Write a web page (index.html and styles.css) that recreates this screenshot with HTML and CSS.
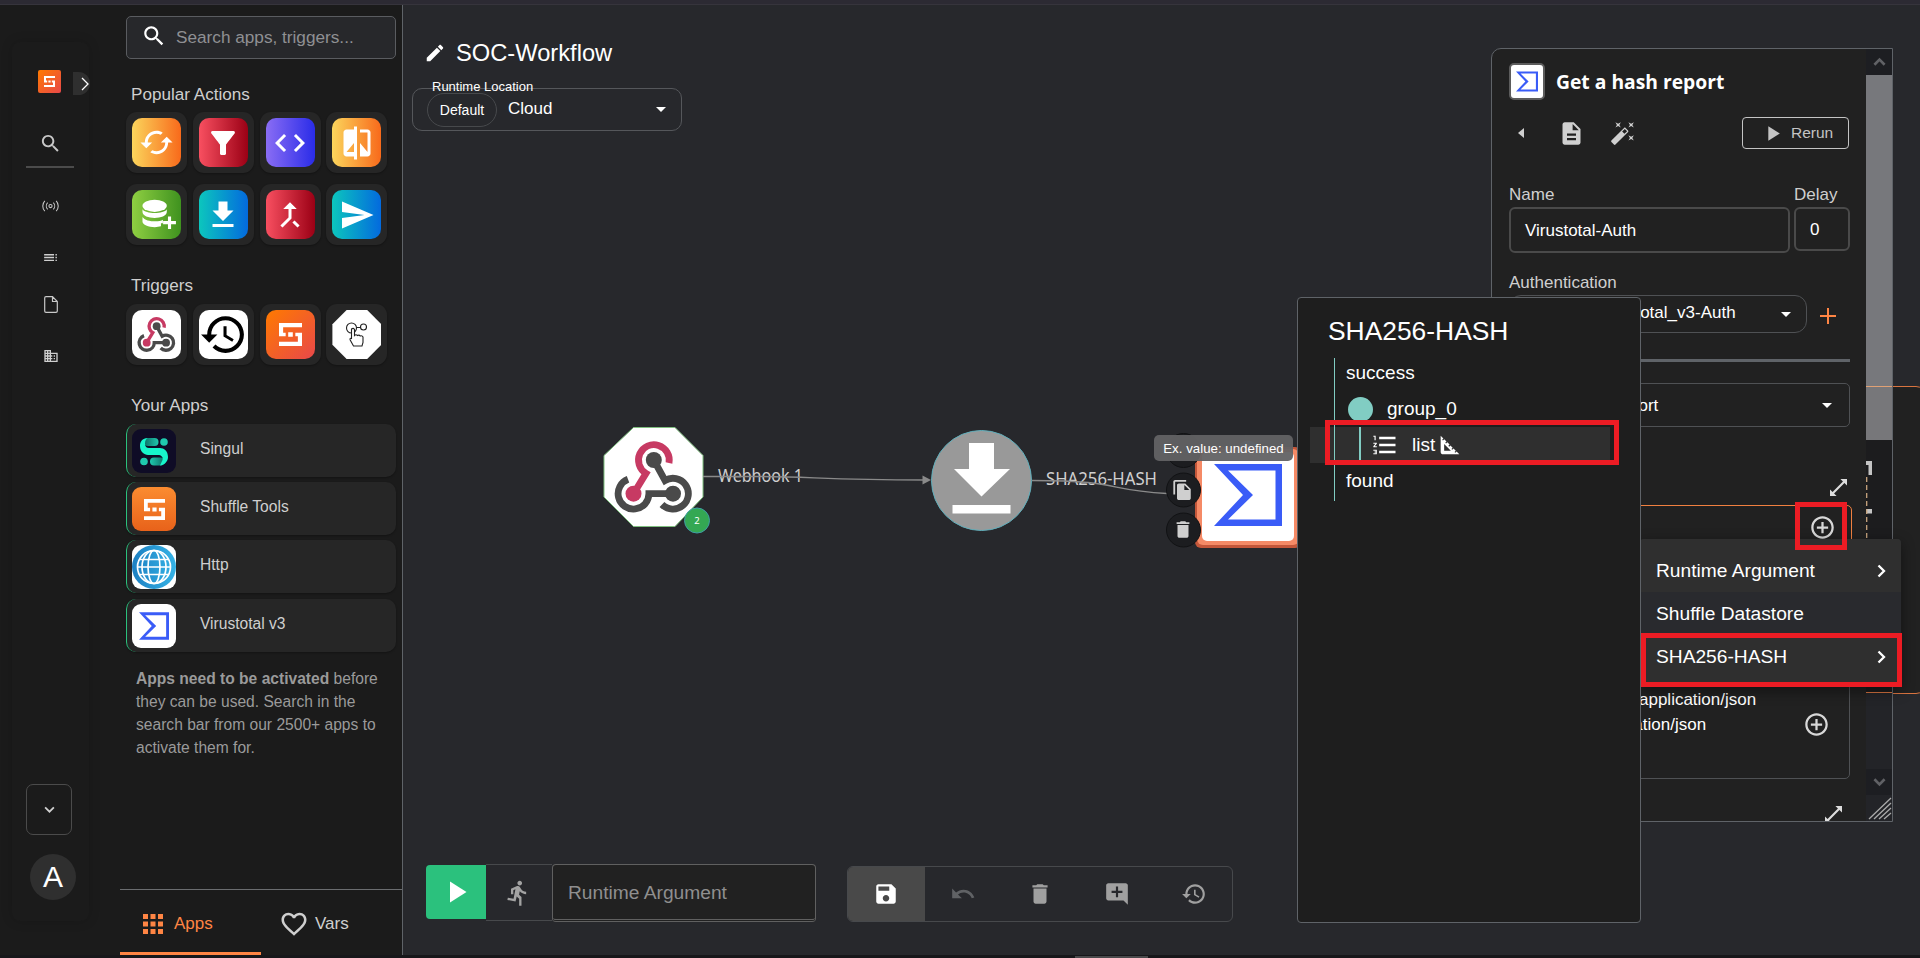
FILE: index.html
```html
<!DOCTYPE html>
<html lang="en">
<head>
<meta charset="utf-8">
<title>SOC-Workflow</title>
<link rel="stylesheet" href="styles.css">
</head>
<body>
<svg class="sprite" aria-hidden="true">
  <defs>
    <linearGradient id="teal" x1="0" x2="1"><stop offset="0" stop-color="#0d6e66"/><stop offset="1" stop-color="#1fc9ae"/></linearGradient>
    <linearGradient id="teal2" x1="0" x2="1"><stop offset="0" stop-color="#1fc9ae"/><stop offset="1" stop-color="#0d6e66"/></linearGradient>
    <linearGradient id="globe" x1="0" x2="1"><stop offset="0" stop-color="#1c7fc2"/><stop offset="1" stop-color="#35b3e6"/></linearGradient>
  </defs>
  <symbol id="search" viewBox="0 0 24 24"><path d="M15.5 14h-.79l-.28-.27C15.41 12.59 16 11.11 16 9.5 16 5.91 13.09 3 9.5 3S3 5.91 3 9.5 5.91 16 9.5 16c1.61 0 3.09-.59 4.23-1.57l.27.28v.79l5 4.99L20.49 19l-4.99-5zm-6 0C7.01 14 5 11.99 5 9.5S7.01 5 9.5 5 14 7.01 14 9.5 11.99 14 9.5 14z"/></symbol>
  <symbol id="cached" viewBox="0 0 24 24"><path d="M19 8l-4 4h3c0 3.31-2.69 6-6 6-1.01 0-1.97-.25-2.8-.7l-1.46 1.46C8.97 19.54 10.43 20 12 20c4.42 0 8-3.58 8-8h3l-4-4zM6 12c0-3.31 2.69-6 6-6 1.01 0 1.97.25 2.8.7l1.46-1.46C15.03 4.46 13.57 4 12 4c-4.42 0-8 3.58-8 8H1l4 4 4-4H6z"/></symbol>
  <symbol id="filter" viewBox="0 0 24 24"><path d="M4.25 5.61C6.27 8.2 10 13 10 13v6c0 .55.45 1 1 1h2c.55 0 1-.45 1-1v-6s3.72-4.8 5.74-7.39c.51-.66.04-1.61-.79-1.61H5.04c-.83 0-1.3.95-.79 1.61z"/></symbol>
  <symbol id="code" viewBox="0 0 24 24"><path d="M9.4 16.6 4.8 12l4.6-4.6L8 6l-6 6 6 6 1.4-1.4zm5.2 0 4.6-4.6-4.6-4.6L16 6l6 6-6 6-1.4-1.4z"/></symbol>
  <symbol id="compare" viewBox="0 0 24 24"><path d="M10 3H5c-1.1 0-2 .9-2 2v14c0 1.1.9 2 2 2h5v2h2V1h-2v2zm0 15H5l5-6v6zm9-15h-5v2h5v13l-5-6v9h5c1.1 0 2-.9 2-2V5c0-1.1-.9-2-2-2z"/></symbol>
  <symbol id="dbadd" viewBox="0 0 36 31"><ellipse cx="13" cy="6.5" rx="12.5" ry="6.3"/><path d="M.5 10c3 5.200 22 5.200 25 0v3c0 8-25 8-25 0zM.5 18c3 5.200 17 5.600 21 3v3.500h-2v3.200C11 30 .5 27 .5 23zM26.700 17.500h3.200v4.700h5v3.300h-5v4.800h-3.200v-4.800h-5v-3.300h5z"/></symbol>
  <symbol id="download" viewBox="0 0 24 24"><path d="M19 9h-4V3H9v6H5l7 7 7-7zM5 18v2h14v-2H5z"/></symbol>
  <symbol id="merge" viewBox="0 0 24 24"><path d="M17 20.41 18.41 19 15 15.59 13.59 17 17 20.41zM7.500 8H11v5.59L5.590 19 7 20.41l6-6V8h3.500L12 3.500 7.500 8z"/></symbol>
  <symbol id="send" viewBox="0 0 24 24"><path d="M2.010 21 23 12 2.010 3 2 10l15 2-15 2z"/></symbol>
  <symbol id="history" viewBox="0 0 24 24"><path d="M13 3c-4.970 0-9 4.030-9 9H1l3.890 3.890.07.14L9 12H6c0-3.870 3.130-7 7-7s7 3.130 7 7-3.130 7-7 7c-1.930 0-3.680-.79-4.940-2.060l-1.420 1.420C8.270 19.990 10.510 21 13 21c4.970 0 9-4.030 9-9s-4.030-9-9-9zm-1 5v5l4.280 2.540.72-1.210-3.500-2.080V8H12z"/></symbol>
  <symbol id="edit" viewBox="0 0 24 24"><path d="M3 17.250V21h3.750L17.810 9.940l-3.750-3.750L3 17.250zM20.710 7.040c.39-.39.39-1.020 0-1.410l-2.340-2.340c-.39-.39-1.020-.39-1.410 0l-1.830 1.830 3.750 3.750 1.830-1.830z"/></symbol>
  <symbol id="play" viewBox="0 0 24 24"><path d="M8 5v14l11-7z"/></symbol>
  <symbol id="run" viewBox="0 0 24 24"><path d="M13.490 5.480c1.100 0 2-.9 2-2s-.9-2-2-2-2 .9-2 2 .9 2 2 2zm-3.600 13.900 1-4.400 2.100 2v6h2v-7.500l-2.100-2 .6-3c1.300 1.500 3.300 2.500 5.500 2.500v-2c-1.900 0-3.500-1-4.300-2.400l-1-1.600c-.4-.6-1-1-1.700-1-.3 0-.5.1-.8.1l-5.200 2.200v4.700h2v-3.400l1.800-.7-1.600 8.100-4.900-1-.4 2 7 1.400z"/></symbol>
  <symbol id="save" viewBox="0 0 24 24"><path d="M17 3H5c-1.110 0-2 .9-2 2v14c0 1.100.89 2 2 2h14c1.100 0 2-.9 2-2V7l-4-4zm-5 16c-1.660 0-3-1.340-3-3s1.340-3 3-3 3 1.340 3 3-1.340 3-3 3zm3-10H5V5h10v4z"/></symbol>
  <symbol id="undo" viewBox="0 0 24 24"><path d="M12.500 8c-2.650 0-5.050.99-6.900 2.600L2 7v9h9l-3.620-3.620c1.390-1.160 3.160-1.880 5.120-1.880 3.540 0 6.550 2.310 7.600 5.500l2.370-.78C21.080 11.030 17.150 8 12.500 8z"/></symbol>
  <symbol id="trash" viewBox="0 0 24 24"><path d="M6 19c0 1.100.9 2 2 2h8c1.100 0 2-.9 2-2V7H6v12zM19 4h-3.500l-1-1h-5l-1 1H5v2h14V4z"/></symbol>
  <symbol id="comment" viewBox="0 0 24 24"><path d="M21.990 4c0-1.100-.89-2-1.990-2H4c-1.100 0-2 .9-2 2v12c0 1.100.9 2 2 2h14l4 4-.01-18zM17 11h-4v4h-2v-4H7V9h4V5h2v4h4v2z"/></symbol>
  <symbol id="doc" viewBox="0 0 24 24"><path d="M14 2H6c-1.100 0-1.990.9-1.990 2L4 20c0 1.100.89 2 1.990 2H18c1.100 0 2-.9 2-2V8l-6-6zm2 16H8v-2h8v2zm0-4H8v-2h8v2zm-3-5V3.500L18.500 9H13z"/></symbol>
  <symbol id="wand" viewBox="0 0 24 24"><path d="M7.500 5.600L10 7 8.600 4.500 10 2 7.500 3.400 5 2l1.400 2.500L5 7zm12 9.800L17 14l1.400 2.500L17 19l2.500-1.400L22 19l-1.400-2.500L22 14zM22 2l-2.500 1.400L17 2l1.400 2.500L17 7l2.500-1.400L22 7l-1.400-2.500zm-7.630 5.290c-.39-.39-1.020-.39-1.410 0L1.290 18.960c-.39.39-.39 1.020 0 1.410l2.340 2.340c.39.39 1.020.39 1.410 0L16.700 11.050c.39-.39.39-1.020 0-1.410l-2.330-2.350zm-1.030 5.490l-2.120-2.120 2.440-2.440 2.120 2.120-2.440 2.440z"/></symbol>
  <symbol id="copy" viewBox="0 0 24 24"><path d="M16 1H4c-1.100 0-2 .9-2 2v14h2V3h12V1zm-1 4l6 6v10c0 1.100-.9 2-2 2H7.990C6.890 23 6 22.100 6 21l.01-14c0-1.100.89-2 1.990-2h7zm-1 7h5.500L14 6.500V12z"/></symbol>
  <symbol id="heart" viewBox="0 0 24 24"><path d="M16.500 3c-1.740 0-3.410.81-4.500 2.090C10.910 3.810 9.240 3 7.500 3 4.420 3 2 5.420 2 8.500c0 3.780 3.400 6.860 8.550 11.540L12 21.350l1.450-1.320C18.600 15.360 22 12.280 22 8.500 22 5.420 19.580 3 16.500 3zm-4.400 15.550l-.1.100-.1-.1C7.140 14.240 4 11.390 4 8.500 4 6.500 5.500 5 7.500 5c1.540 0 3.040.99 3.570 2.360h1.870C13.460 5.990 14.960 5 16.500 5c2 0 3.500 1.500 3.500 3.500 0 2.890-3.140 5.740-7.900 10.050z"/></symbol>
  <symbol id="apps" viewBox="0 0 24 24"><path d="M4 8h4V4H4v4zm6 12h4v-4h-4v4zm-6 0h4v-4H4v4zm0-6h4v-4H4v4zm6 0h4v-4h-4v4zm6-10v4h4V4h-4zm-6 4h4V4h-4v4zm6 6h4v-4h-4v4zm0 6h4v-4h-4v4z"/></symbol>
  <symbol id="numlist" viewBox="0 0 24 24"><path d="M2 17h2v.5H3v1h1v.5H2v1h3v-4H2v1zm1-9h1V4H2v1h1v3zm-1 3h1.800L2 13.100v.9h3v-1H3.200L5 10.900V10H2v1zm5-6v2h14V5H7zm0 14h14v-2H7v2zm0-6h14v-2H7v2z"/></symbol>
  <symbol id="ruler" viewBox="0 0 24 24"><path d="M17.660 17.660l-1.060 1.060-.71-.71 1.060-1.060-1.940-1.940-1.060 1.060-.71-.71 1.060-1.060-1.940-1.940-1.060 1.060-.71-.71 1.060-1.060L9.700 9.700l-1.060 1.060-.71-.71 1.060-1.060-1.940-1.940-1.060 1.060-.71-.71 1.060-1.060L4 4v14c0 1.100.9 2 2 2h14l-2.340-2.340zM7 17v-5.760L12.760 17H7z"/></symbol>
  <symbol id="addcircle" viewBox="0 0 24 24"><path d="M13 7h-2v4H7v2h4v4h2v-4h4v-2h-4V7zm-1-5C6.480 2 2 6.480 2 12s4.480 10 10 10 10-4.480 10-10S17.520 2 12 2zm0 18c-4.410 0-8-3.590-8-8s3.590-8 8-8 8 3.590 8 8-3.590 8-8 8z"/></symbol>
  <symbol id="toc" viewBox="0 0 24 24"><path d="M3 9h14V7H3v2zm0 4h14v-2H3v2zm0 4h14v-2H3v2zm16 0h2v-2h-2v2zm0-10v2h2V7h-2zm0 6h2v-2h-2v2z"/></symbol>
  <symbol id="business" viewBox="0 0 24 24"><path d="M12 7V3H2v18h20V7H12zM6 19H4v-2h2v2zm0-4H4v-2h2v2zm0-4H4V9h2v2zm0-4H4V5h2v2zm4 12H8v-2h2v2zm0-4H8v-2h2v2zm0-4H8V9h2v2zm0-4H8V5h2v2zm10 12h-8v-2h2v-2h-2v-2h2v-2h-2V9h8v10zm-2-8h-2v2h2v-2zm0 4h-2v2h2v-2z"/></symbol>
  <symbol id="expand" viewBox="0 0 18 18"><path d="M18 7V0h-7l2.700 2.700L2.700 13.700 0 11v7h7l-2.700-2.700L15.300 4.300z"/></symbol>
  <symbol id="webhook" viewBox="0 0 100 100"><g fill="none" stroke-width="6.800"><path stroke="#4a4a4a" d="M24.500 52.300A15.400 15.400 0 1 0 45.400 66.700H69.500M50.300 33 61.500 53.500A15.400 15.400 0 1 1 58.500 77.500"/><path stroke="#c73a63" d="M65.500 36A15.400 15.400 0 1 0 42.500 46.300L30 66.700"/></g><circle cx="50.300" cy="33" r="8" fill="#4a4a4a"/><circle cx="69.500" cy="66.700" r="8" fill="#4a4a4a"/><circle cx="30" cy="66.700" r="8" fill="#c73a63"/></symbol>
  <symbol id="vt" viewBox="0 0 68 62"><path fill="#3a5cf7" fill-rule="evenodd" d="M0 0H68V62H0L29 31ZM14 6.500 39 31 14 55.500H61.500V6.500Z"/></symbol>
  <symbol id="shuffle" viewBox="0 0 100 100"><path d="M0 0H100V18H18V42H29V58H0ZM100 100H0V82H82V58H71V42H100ZM40 40H60V60H40Z"/></symbol>
</svg>

<div class="topstrip"></div>
<div class="app">
  <nav class="rail">
    <div class="rail-card">
      <div class="rail-head">
        <span class="brand"><svg><use href="#shuffle"/></svg></span>
        <span class="rail-toggle"><svg viewBox="0 0 8 14"><path d="M1 1 7 7 1 13"/></svg></span>
      </div>
      <svg class="r-search"><use href="#search"/></svg>
      <div class="r-line"></div>
      <svg class="r-cast" viewBox="0 0 18 14"><circle cx="9" cy="7" r="1.700"/><path d="M6 3.500a5 5 0 0 0 0 7M12 3.500a5 5 0 0 1 0 7M3 1.500a8 8 0 0 0 0 11M15 1.500a8 8 0 0 1 0 11"/></svg>
      <svg class="r-toc"><use href="#toc"/></svg>
      <svg class="r-file" viewBox="0 0 14 17"><path d="M.7 2Q.7.700 2 .700H8.500L13.300 5.500V15Q13.300 16.300 12 16.300H2Q.7 16.300.7 15ZM8.500.7V5.500H13.300"/></svg>
      <svg class="r-biz"><use href="#business"/></svg>
      <div class="r-drop"><svg viewBox="0 0 12 8"><path d="M1 1.500 6 6.500 11 1.500"/></svg></div>
      <div class="avatar">A</div>
    </div>
  </nav>

  <aside class="side">
    <div class="side-body">
      <div class="searchbox"><svg><use href="#search"/></svg><span>Search apps, triggers...</span></div>
      <h4 class="t1">Popular Actions</h4>
      <div class="tiles">
        <div class="tile"><i class="orange"><svg class="s35"><use href="#cached"/></svg></i></div>
        <div class="tile"><i class="red"><svg class="s36"><use href="#filter"/></svg></i></div>
        <div class="tile"><i class="violet"><svg class="s36"><use href="#code"/></svg></i></div>
        <div class="tile"><i class="orange"><svg class="s36"><use href="#compare"/></svg></i></div>
        <div class="tile"><i class="green"><svg class="s-db"><use href="#dbadd"/></svg></i></div>
        <div class="tile"><i class="cyan"><svg class="s36"><use href="#download"/></svg></i></div>
        <div class="tile"><i class="red"><svg class="s36"><use href="#merge"/></svg></i></div>
        <div class="tile"><i class="cyan"><svg class="s36"><use href="#send"/></svg></i></div>
      </div>
      <h4 class="t2">Triggers</h4>
      <div class="tiles">
        <div class="tile"><i class="white"><svg class="s49"><use href="#webhook"/></svg></i></div>
        <div class="tile"><i class="white dark"><svg class="s49"><use href="#history"/></svg></i></div>
        <div class="tile"><i class="brandbg"><svg class="s23"><use href="#shuffle"/></svg></i></div>
        <div class="tile"><i class="octo"><svg class="s49" viewBox="0 0 49 49" fill="none" stroke="#222" stroke-width="1.100"><g fill="none"><circle cx="19.500" cy="18" r="5"/><circle cx="31.500" cy="17" r="3"/><path d="M24.500 17.500h4"/></g><path fill="#fff" d="M19.500 19q2-1.500 3 .5v6q1.500-1.500 3 0 1.700-1 2.700.5 2-.7 2.800 1v5.500L30 36H21.500l-3.300-6q-.8-2.200 1.300-1.500z"/></svg></i></div>
      </div>
      <h4 class="t3">Your Apps</h4>
      <div class="applist">
        <div class="approw"><i class="singul"><svg viewBox="0 0 44 44"><rect x="12" y="9" width="14.500" height="8" rx="4" fill="url(#teal)"/><rect x="18" y="28.500" width="14.500" height="8" rx="4" fill="url(#teal2)"/><circle cx="32" cy="13" r="3.800" fill="#1fc9ae"/><circle cx="12" cy="32.500" r="3.800" fill="#1fc9ae"/><path fill="#17f5cb" d="M16 9C10 9 8 13 8 17 8 22.500 12 26 16 26H26C29 26 31.500 28 30.500 31L28 36.500C33 36 36 32 36 28 36 22 32 19 28 19H17C14.500 19 13 17.500 13 14.500 13 11.500 14 10 16 9Z"/></svg></i><span>Singul</span></div>
        <div class="approw"><i class="shuf"><svg class="s21"><use href="#shuffle"/></svg></i><span>Shuffle Tools</span></div>
        <div class="approw"><i class="white"><svg viewBox="0 0 44 44"><circle cx="22" cy="22" r="22" fill="url(#globe)"/><g fill="none" stroke="#fff" stroke-width="1.700"><circle cx="22" cy="22" r="16.500"/><ellipse cx="22" cy="22" rx="6" ry="16.500"/><ellipse cx="22" cy="22" rx="12" ry="16.500"/><path d="M5.500 22H38.500M8 14.500H36M8 29.500H36"/></g></svg></i><span>Http</span></div>
        <div class="approw"><i class="white"><svg class="vt30"><use href="#vt"/></svg></i><span>Virustotal v3</span></div>
      </div>
      <p class="hint"><b>Apps need to be activated</b> before<br>they can be used. Search in the<br>search bar from our 2500+ apps to<br>activate them for.</p>
    </div>
    <div class="tabs">
      <div class="tab on"><svg><use href="#apps"/></svg>Apps</div>
      <div class="tab"><svg class="h"><use href="#heart"/></svg>Vars</div>
    </div>
  </aside>

  <main class="canvas">
    <header class="wf-head">
      <div class="wf-title"><svg><use href="#edit"/></svg><h1>SOC-Workflow</h1></div>
      <div class="loc"><span class="loc-label">Runtime Location</span><span class="chip">Default</span><span class="loc-val">Cloud</span><i class="caret"></i></div>
    </header>

    <svg class="graph" viewBox="0 0 895 140">
      <path d="M230.500 18.500H272L300 46.500V88L272 117.500H230.500L201 88V46.500z" fill="#fff" stroke="#7fbf7f"/>
      <svg x="200.500" y="18" width="100" height="100"><use href="#webhook"/></svg>
      <circle cx="294" cy="111.500" r="12.500" fill="#34a853" stroke="#3f9fa5"/>
      <text x="294" y="115" class="g-num" text-anchor="middle">2</text>
      <text x="315" y="73" class="g-label" textLength="85" lengthAdjust="spacingAndGlyphs">Webhook 1</text>
      <circle cx="578.500" cy="71.500" r="50" fill="#999" stroke="#5fb0bd"/>
      <path fill="#fff" d="M566 34h25v26h16L578.500 87.500 551 60h15zM549.500 96h58v8.500h-58z"/>
      <text x="643" y="76" class="g-label" textLength="111" lengthAdjust="spacingAndGlyphs">SHA256-HASH</text>
      <g fill="none" stroke="#8a8a8a" stroke-width="1.400"><path d="M300 67.500H350C410 67.500 420 71 522 71M629 71.500C720 71.500 700 81 764 84.500"/></g>
      <path fill="#8a8a8a" d="M519.500 66.500 528 71 519.500 75.500z"/>
      <circle cx="845" cy="41" r="9.500" fill="#2f7fc9"/>
      <rect x="792" y="38" width="106" height="101" rx="6" fill="#c4573a"/>
      <rect x="794" y="40" width="102" height="96" rx="6" fill="#f58a66"/>
      <rect x="799" y="43" width="92" height="89" rx="5" fill="#fff"/>
      <svg x="811" y="55" width="68" height="62"><use href="#vt"/></svg>
      <g fill="#1c1d20" stroke="#111214"><circle cx="780.500" cy="41.500" r="17"/><circle cx="780.500" cy="81" r="17"/><circle cx="780.500" cy="121" r="17"/></g>
      <g fill="#e8e8e8"><svg x="768.500" y="70" width="22" height="22"><use href="#copy"/></svg><svg x="769" y="109.500" width="22" height="22"><use href="#trash"/></svg></g>
    </svg>
    <div class="tooltip">Ex. value: undefined</div>

    <footer class="bars">
      <div class="runbar">
        <div class="playbtn"><svg><use href="#play"/></svg></div>
        <div class="runbtn"><svg><use href="#run"/></svg></div>
        <div class="argbox">Runtime Argument</div>
      </div>
      <div class="tools">
        <div class="on"><svg><use href="#save"/></svg></div>
        <div class="dim"><svg><use href="#undo"/></svg></div>
        <div><svg><use href="#trash"/></svg></div>
        <div><svg><use href="#comment"/></svg></div>
        <div><svg><use href="#history"/></svg></div>
      </div>
    </footer>
  </main>
</div>
<div class="botstrip"><i></i></div>

<div class="backbox"></div>
<section class="panel">
  <div class="p-main">
    <div class="p-head"><span class="p-logo"><svg><use href="#vt"/></svg></span><h2>Get a hash report</h2></div>
    <div class="p-tools"><i class="left"></i><svg class="d"><use href="#doc"/></svg><svg class="w"><use href="#wand"/></svg><span class="rerun"><svg><use href="#play"/></svg>Rerun</span></div>
    <div class="p-row"><div class="f-name"><label>Name</label><div class="inp">Virustotal-Auth</div></div><div class="f-delay"><label>Delay</label><div class="inp">0</div></div></div>
    <label class="l-auth">Authentication</label>
    <div class="p-auth"><div class="sel"><span>Virustotal_v3-Auth</span><i class="caret"></i></div><svg viewBox="0 0 16 16"><path d="M8 0V16M0 8H16"/></svg></div>
    <div class="p-div"></div>
    <div class="sel2"><span>Get a hash report</span><i class="caret"></i></div>
    <svg class="exp"><use href="#expand"/></svg>
    <div class="idbox"><svg><use href="#addcircle"/></svg></div>
    <div class="hdrbox"><div>Content-Type=application/json<br>Accept=application/json</div><svg><use href="#addcircle"/></svg></div>
    <svg class="exp e2"><use href="#expand"/></svg>
  </div>
  <div class="scroll">
    <div class="sb"><svg viewBox="0 0 14 10"><path d="M1.500 8 7 2.500 12.500 8"/></svg></div>
    <div class="thumb"></div>
    <div class="track"><svg viewBox="0 0 8 82"><path fill="#c4c4c4" d="M0 2h6v14H2.500V6H0zM0 50h6v4.500H0z"/><path d="M.7 18V82" stroke="#c9a57f" stroke-width="1.300" stroke-dasharray="5 3"/></svg></div>
    <div class="sb"><svg viewBox="0 0 14 10"><path d="M1.500 2 7 7.500 12.500 2"/></svg></div>
    <div class="grip"><svg viewBox="0 0 26 25"><path d="M3 24 25 3M8 24 25 8M13 24 25 13M18 24 25 18" stroke="#aaa" stroke-width="1.300"/></svg></div>
  </div>
</section>

<div class="menu">
  <div class="mi a">Runtime Argument<svg viewBox="0 0 9 14"><path d="M1.500 1.500 7 7 1.500 12.500"/></svg></div>
  <div class="mi b">Shuffle Datastore</div>
  <div class="mi c">SHA256-HASH<svg viewBox="0 0 9 14"><path d="M1.500 1.500 7 7 1.500 12.500"/></svg></div>
</div>

<div class="pop">
  <h3>SHA256-HASH</h3>
  <div class="tree">
    <div class="tr">success</div>
    <div class="tr"><i class="dot"></i>group_0</div>
    <div class="tr hl"><svg class="n"><use href="#numlist"/></svg>list<svg class="r"><use href="#ruler"/></svg></div>
    <div class="tr">found</div>
  </div>
</div>
<div class="mark m1"></div>
<div class="mark m2"></div>
<div class="mark m3"></div>
</body>
</html>
```
FILE: styles.css
```css
* { box-sizing: border-box; }
body { margin: 0; width: 1920px; height: 958px; overflow: hidden; background: #1b1b1b; color: #cfcfcf; font-family: "Liberation Sans", Arial, sans-serif; font-size: 17px; display: flex; flex-direction: column; }
svg { display: block; fill: currentColor; flex: none; }
h1, h2, h3, h4, p { margin: 0; font-weight: 400; }
i { font-style: normal; display: block; flex: none; }
.sprite { position: absolute; width: 0; height: 0; }
.topstrip { height: 5px; background: #2c2a33; border-bottom: 1px solid #36343c; flex: none; }
.app { flex: 1; display: flex; min-height: 0; }
.botstrip { height: 3px; background: #17171a; flex: none; padding-left: 1075px; }
.botstrip i { width: 73px; height: 2px; margin-top: 1px; background: #4a4a4c; }

.rail { width: 120px; padding: 37px 0 0 12px; }
.rail-card { width: 77px; height: 879px; border-radius: 8px; background: #1b1b1b; box-shadow: 0 0 12px rgba(0,0,0,.16); display: flex; flex-direction: column; align-items: flex-start; padding-top: 28px; }
.rail-head { display: flex; padding-left: 26px; }
.brand { width: 23px; height: 23px; border-radius: 2px; background: linear-gradient(135deg, #ff7a00, #e8484a); display: grid; place-items: center; color: #fff; }
.brand svg { width: 11px; height: 11px; }
.rail-toggle { margin: 2px 0 0 12px; width: 17px; height: 23px; background: #2f2f2f; border-radius: 0 12px 12px 0; display: flex; align-items: center; justify-content: flex-end; padding-right: 1px; }
.rail-toggle svg { width: 8px; height: 14px; fill: none; stroke: #fff; stroke-width: 1.3; }
.r-search { width: 23px; height: 23px; margin: 37px 0 0 27px; color: #c8c8c8; }
.r-line { width: 48px; height: 2px; background: #4b4b4b; margin: 11px 0 0 14px; }
.r-cast { width: 17px; height: 14px; margin: 31px 0 0 30px; fill: none; stroke: #c8c8c8; stroke-width: 1.1; }
.r-toc { width: 17px; height: 17px; margin: 36px 0 0 30px; }
.r-file { width: 14px; height: 17px; margin: 30px 0 0 32px; fill: none; stroke: #c8c8c8; stroke-width: 1.2; }
.r-biz { width: 16px; height: 16px; margin: 35px 0 0 31px; }
.r-drop { width: 46px; height: 51px; border: 1px solid #4b4b4b; border-radius: 7px; margin: 420px 0 0 14px; display: grid; place-items: center; }
.r-drop svg { width: 11px; height: 7px; fill: none; stroke: #d0d0d0; stroke-width: 2; }
.avatar { width: 46px; height: 46px; border-radius: 50%; background: #2f2f2f; color: #fff; font-size: 30px; display: grid; place-items: center; margin: 19px 0 0 18px; }

.side { width: 283px; border-right: 1px solid #5f6368; display: flex; flex-direction: column; }
.side-body { flex: 1; padding: 11px 0 0 6px; }
.searchbox { width: 270px; height: 43px; border: 1px solid #5a5c60; border-radius: 5px; background: #27282b; display: flex; align-items: center; color: #8f9093; }
.searchbox svg { width: 26px; height: 26px; color: #fff; margin: -3px 8px 0 14px; }
.searchbox span { margin-left: 1px; font-size: 17.2px; }
h4 { font-size: 17.1px; line-height: 20px; padding-left: 5px; }
.t1 { margin-top: 26px; }
.t2 { margin-top: 31px; }
.t3 { margin-top: 31px; }
.tiles { display: grid; grid-template-columns: repeat(4, 61px); column-gap: 5.8px; row-gap: 11px; margin-top: 7px; }
.t2 + .tiles { margin-top: 8px; }
.tile { height: 61px; border-radius: 11px; background: #262626; padding: 6px; box-shadow: 0 1px 2px rgba(0,0,0,.3); }
.tile i { width: 49px; height: 49px; border-radius: 10px; display: grid; place-items: center; color: #fff; overflow: hidden; }
.orange { background: linear-gradient(90deg, #fbd55c, #f86a1b); }
.red { background: linear-gradient(90deg, #f84f60, #9b0015); }
.violet { background: linear-gradient(90deg, #8a6df4, #2a2ce8); }
.green { background: linear-gradient(90deg, #8fcf42, #3f921f); }
.cyan { background: linear-gradient(90deg, #0cc6bd, #036ade); }
.white { background: #fff; }
.tile i.dark { color: #000; }
.brandbg { background: linear-gradient(135deg, #ff7a00, #e8484a); }
.octo { background: #fff; clip-path: polygon(29% 0, 71% 0, 100% 29%, 100% 71%, 71% 100%, 29% 100%, 0 71%, 0 29%); }
.s35 { width: 35px; height: 35px; }
.s36 { width: 36px; height: 36px; }
.s49 { width: 49px; height: 49px; }
.s23 { width: 23px; height: 23px; }
.s21 { width: 21px; height: 21px; }
.s-db { width: 35px; height: 31px; margin-left: 5px; }
.applist { display: flex; flex-direction: column; gap: 5.2px; margin-top: 8px; }
.approw { width: 270px; height: 53px; background: #262626; border-radius: 10px; border-left: 1px solid #2bc17d; display: flex; padding: 5px; box-shadow: 0 1px 2px rgba(0,0,0,.3); }
.approw i { width: 44px; height: 44px; border-radius: 9px; overflow: hidden; display: grid; place-items: center; color: #fff; }
.approw span { margin: 11px 0 0 24px; font-size: 15.6px; line-height: 18px; }
.singul { background: #0f0c26; }
.shuf { background: linear-gradient(#fb8c30, #e8621a); }
.vt30 { width: 30px; height: 28px; }
.hint { font-size: 15.6px; line-height: 23.3px; color: #9a9a9a; margin: 15px 0 0 10px; white-space: nowrap; }
.tabs { height: 66px; border-top: 1px solid #6b6d70; display: flex; }
.tab { width: 141px; display: flex; align-items: center; padding: 3px 0 0 18px; }
.tab svg { width: 30px; height: 30px; margin-right: 6px; }
.tab.on { color: #ff8544; border-bottom: 3px solid #ff8544; padding-top: 6px; }
.tab .h { margin-right: 6px; }

.canvas { flex: 1; background: #27282c; position: relative; }
.wf-head { padding: 33px 0 0 9px; }
.wf-title { display: flex; align-items: center; color: #fff; height: 30px; }
.wf-title svg { width: 22px; height: 22px; margin: -1px 10px 0 12px; }
.wf-title h1 { font-size: 23.7px; }
.loc { position: relative; width: 270px; height: 43px; margin-top: 20px; border: 1px solid #55575b; border-radius: 10px; display: flex; align-items: center; color: #fff; padding-left: 14px; }
.loc-label { position: absolute; left: 19px; top: -10px; font-size: 13px; line-height: 15px; }
.chip { height: 34px; width: 70px; border: 1px solid #47494c; border-radius: 17px; display: grid; place-items: center; font-size: 14px; }
.loc-val { margin: -1px 0 0 11px; flex: 1; }
.caret { width: 10px; border: 5px solid transparent; border-top-color: #fff; border-bottom: 0; }
.loc .caret { margin-right: 15px; }
.graph { position: absolute; left: 0; top: 404px; width: 895px; height: 140px; }
.g-label { font-family: "Noto Sans", sans-serif; font-size: 17.5px; fill: #cfcfcf; }
.g-num { font-family: "Noto Sans", sans-serif; font-size: 9.5px; fill: #fff; }
.tooltip { position: absolute; left: 751px; top: 430px; width: 139px; height: 26px; border-radius: 5px; background: #626264f2; color: #fff; font-size: 13.3px; display: grid; place-items: center; white-space: nowrap; }
.bars { position: absolute; left: 23px; top: 859px; display: flex; gap: 31px; }
.runbar { display: flex; width: 390px; height: 58px; }
.playbtn { width: 60px; height: 54px; margin-top: 1px; background: #2bc17d; border-radius: 4px 0 0 4px; display: grid; place-items: center; color: #fff; }
.playbtn svg { width: 36px; height: 36px; }
.runbtn { width: 66px; border: solid #47494c; border-width: 1px 0; height: 57px; display: grid; place-items: center; color: #a3a3a3; padding-right: 3px; }
.runbtn svg { width: 28px; height: 28px; }
.argbox { flex: 1; border: 1px solid #606060; border-bottom: 3px double #606060; border-radius: 4px; background: #212121; color: #8f8f8f; font-size: 19.2px; display: flex; align-items: center; padding: 2px 0 0 15px; }
.tools { margin-top: 2px; width: 386px; height: 56px; border: 1px solid #47494c; border-radius: 6px; display: flex; overflow: hidden; color: #a0a0a0; }
.tools div { width: 77px; display: grid; place-items: center; }
.tools svg { width: 26px; height: 26px; }
.tools .on { background: #494949; color: #fff; }
.tools .dim { color: #606265; }

.backbox { position: absolute; left: 1860px; top: 386px; width: 66px; height: 308px; background: #212121; border: 1px solid #d97440; border-radius: 10px; }
.panel { position: absolute; left: 1491px; top: 48px; width: 402px; height: 774px; background: #212121; border: 1px solid #5f6368; border-radius: 10px 0 0 0; display: flex; overflow: hidden; }
.p-main { width: 374px; padding: 14px 0 0 17px; }
.p-head { display: flex; align-items: center; height: 37px; color: #fff; }
.p-logo { width: 36px; height: 37px; border: 2px solid #5c5c5c; border-radius: 5px; background: #fff; display: grid; place-items: center; }
.p-logo svg { width: 22px; height: 21px; }
.p-head h2 { font: 700 19.3px "Open Sans", sans-serif; margin-left: 11px; }
.p-tools { display: flex; align-items: center; margin-top: 17px; height: 32px; color: #d0d0d0; }
.left { width: 6px; border: 5px solid transparent; border-right: 6px solid #d0d0d0; border-left: 0; margin-left: 9px; }
.p-tools .d { width: 27px; height: 27px; margin-left: 34px; }
.p-tools .w { width: 26px; height: 26px; margin-left: 25px; }
.rerun { margin-left: 106px; width: 107px; height: 32px; border: 1px solid #c4c4c4; border-radius: 4px; display: flex; align-items: center; font-size: 15.5px; color: #c4c4c4; padding-left: 17px; }
.rerun svg { width: 25px; height: 25px; margin-right: 6px; }
.p-row { display: flex; gap: 4px; margin-top: 36px; }
label { display: block; line-height: 20px; }
.f-name { width: 281px; }
.f-delay { width: 56px; }
.inp { margin-top: 2px; height: 46px; border: 2px solid #4a4a4a; border-radius: 6px; color: #fff; display: flex; align-items: center; padding: 1px 0 0 14px; }
.f-delay .inp { height: 44px; }
.l-auth { margin-top: 20px; }
.p-auth { display: flex; align-items: center; margin-top: 2px; }
.p-auth .sel { width: 298px; height: 38px; border: 1px solid #4f5154; border-radius: 12px; display: flex; align-items: center; justify-content: space-between; color: #fff; padding: 0 15px 2px 87px; }
.p-auth .caret { margin-top: 3px; }
.p-auth svg { width: 16px; height: 16px; margin: 4px 0 0 13px; stroke: #ff8544; stroke-width: 2; }
.p-div { width: 341px; height: 3px; background: #5f6368; margin-top: 26px; }
.sel2 { width: 341px; height: 44px; margin-top: 21px; border: 1px solid #4f5154; border-radius: 5px; color: #fff; display: flex; align-items: center; justify-content: space-between; padding: 1px 17px 0 16px; }
.exp { width: 17px; height: 17px; margin: 52px 0 0 321px; color: #dcdcdc; }
.idbox { width: 343px; height: 70px; margin-top: 9px; border: 1px solid #f08040; border-radius: 5px; display: flex; justify-content: flex-end; padding: 8px 15px 0 0; }
.idbox svg, .hdrbox svg { width: 27px; height: 27px; color: #d8d8d8; }
.hdrbox { width: 341px; height: 138px; margin-top: 66px; border: 1px solid #4f5154; border-radius: 5px; color: #fff; display: flex; justify-content: space-between; line-height: 25px; padding: 45px 19px 0 17px; white-space: nowrap; }
.hdrbox svg { margin-top: 24px; }
.e2 { margin: 27px 0 0 316px; }
.scroll { width: 26px; display: flex; flex-direction: column; }
.sb { height: 26px; background: #1d1e22; display: grid; place-items: center; }
.sb svg { width: 13px; height: 10px; fill: none; stroke: #606165; stroke-width: 2.8; }
.thumb { height: 365px; background: linear-gradient(#77787c 311px, #e0a175 311px, #e0a175 312px, #77777a 312px); }
.track { flex: 1; background: linear-gradient(#1c1c1e 252px, #d97440 252px, #d97440 253px, #232428 253px); padding-top: 19px; }
.track svg { width: 8px; height: 82px; }
.grip { height: 26px; background: #232428; }

.menu { position: absolute; left: 1640px; top: 539px; width: 261px; height: 148px; background: #292a2e; border-radius: 4px; box-shadow: 0 4px 14px rgba(0,0,0,.45); color: #fff; font-size: 19.2px; display: flex; flex-direction: column; overflow: hidden; }
.mi { display: flex; align-items: center; justify-content: space-between; padding: 0 15px 0 16px; }
.mi svg { width: 9px; height: 14px; fill: none; stroke: #fff; stroke-width: 2.3; }
.a { height: 53px; background: #2f2f2f; padding-top: 10px; }
.b { height: 43px; }
.c { height: 52px; background: #2f2f2f; padding-bottom: 9px; }

.pop { position: absolute; left: 1297px; top: 297px; width: 344px; height: 626px; background: #1e1e1e; border: 1px solid #5f6368; border-radius: 4px; color: #fff; padding: 16px 0 0 12px; }
.pop h3 { font-size: 26.4px; line-height: 34px; padding-left: 18px; }
.tree { margin-top: 7px; width: 300px; font-size: 19px; background: linear-gradient(#81cdc3, #81cdc3) 24px 3px / 1px 143px no-repeat; height: 150px; }
.tr { height: 36px; display: flex; align-items: center; padding-left: 36px; }
.dot { width: 25px; height: 25px; border-radius: 50%; background: #81cdc3; margin: 0 14px 0 2px; }
.hl { background: linear-gradient(#81cdc3, #81cdc3) 49px 0 / 2px 36px no-repeat, linear-gradient(#81cdc3, #81cdc3) 24px 0 / 1px 36px no-repeat, #2f2f2f; padding-left: 61px; }
.n { width: 28px; height: 28px; margin: 0 13px 0 0; }
.r { width: 28px; height: 28px; margin: 0 0 0 1px; }
.mark { position: absolute; border: 5px solid #ec1c24; }
.m1 { left: 1325px; top: 420px; width: 294px; height: 45px; }
.m2 { left: 1795px; top: 502px; width: 52px; height: 48px; }
.m3 { left: 1641px; top: 633px; width: 261px; height: 54px; }
```
